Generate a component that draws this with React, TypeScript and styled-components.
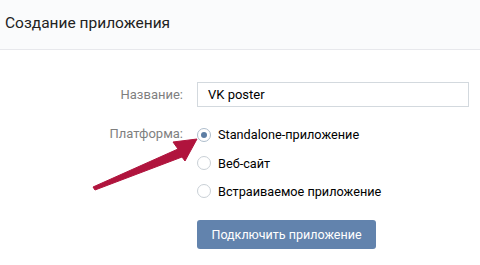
import React from "react";
import styled, { createGlobalStyle } from "styled-components";

const Global = createGlobalStyle`
  html, body { margin: 0; padding: 0; background: #ffffff; }
  body { font-family: Roboto, "Open Sans", "Liberation Sans", sans-serif; -webkit-font-smoothing: antialiased; }
  * { box-sizing: border-box; }
`;

const Page = styled.div`
  position: relative;
  width: 480px;
  height: 265px;
  overflow: hidden;
  background: #ffffff;
`;

const Header = styled.div`
  height: 50px;
  display: flex;
  align-items: center;
  padding: 0 0 4px 5px;
  background: #fafbfc;
  border-bottom: 1px solid #e7e8ec;
`;

const Title = styled.h1`
  margin: 0;
  font-size: 15.5px;
  font-weight: 400;
  color: #222222;
`;

const Form = styled.div`
  display: grid;
  grid-template-columns: 183px 272px;
  column-gap: 14px;
  row-gap: 13px;
  padding-top: 32px;
  align-items: start;
`;

const Label = styled.div<{ $h: number }>`
  height: ${(p) => p.$h}px;
  line-height: ${(p) => p.$h}px;
  text-align: right;
  font-size: 13px;
  color: #7f7f7f;
`;

const Input = styled.div`
  height: 25px;
  border: 1px solid #d3d9de;
  padding: 0 10px;
  font-size: 13px;
  line-height: 23px;
  color: #000000;
`;

const RadioList = styled.div`
  display: flex;
  flex-direction: column;
`;

const RadioItem = styled.div<{ $h: number }>`
  height: ${(p) => p.$h}px;
  display: flex;
  align-items: center;
  gap: 7px;
  font-size: 12.7px;
  color: #000000;
`;

const Circle = styled.span<{ $checked?: boolean }>`
  width: 14px;
  height: 14px;
  border-radius: 50%;
  border: 1px solid ${(p) => (p.$checked ? "#aebdcc" : "#c9d0d6")};
  display: flex;
  align-items: center;
  justify-content: center;
  flex: none;
  &::after {
    content: "";
    width: 6px;
    height: 6px;
    border-radius: 50%;
    background: ${(p) => (p.$checked ? "#5d7ea4" : "transparent")};
  }
`;

const Spacer = styled.div``;

const Button = styled.div`
  width: 179px;
  height: 29px;
  margin-top: 2px;
  border-radius: 3px;
  background: #6283ad;
  color: #ffffff;
  font-size: 12.5px;
  display: flex;
  align-items: center;
  justify-content: center;
`;

const ArrowLayer = styled.svg`
  position: absolute;
  left: 0;
  top: 0;
  pointer-events: none;
`;

export default function App() {
  return (
    <Page>
      <Global />
      <Header>
        <Title>Создание приложения</Title>
      </Header>
      <Form>
        <Label $h={25}>Название:</Label>
        <Input>VK poster</Input>
        <Label $h={28}>Платформа:</Label>
        <RadioList>
          <RadioItem $h={29}>
            <Circle $checked />
            Standalone-приложение
          </RadioItem>
          <RadioItem $h={28}>
            <Circle />
            Веб-сайт
          </RadioItem>
          <RadioItem $h={28}>
            <Circle />
            Встраиваемое приложение
          </RadioItem>
        </RadioList>
        <Spacer />
        <Button>Подключить приложение</Button>
      </Form>
      <ArrowLayer width="480" height="265" viewBox="0 0 480 265">
        <polygon
          points="197,139 173,142 178,149 93,187 95,190 182,157 185,161"
          fill="#b0143d"
          stroke="#b0143d"
          strokeWidth="1"
          strokeLinejoin="round"
        />
      </ArrowLayer>
    </Page>
  );
}
